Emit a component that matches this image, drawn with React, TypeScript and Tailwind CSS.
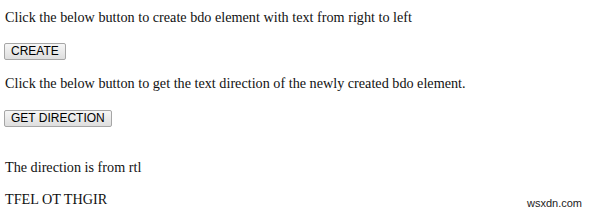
import React from "react";

const btn =
  "h-[17px] px-[6px] border border-[#a6a6a6] rounded-[2px] bg-gradient-to-b from-[#f6f6f6] to-[#dedede] text-[12px] leading-[15px] text-black font-['Liberation_Sans',Arial,sans-serif] self-start";

export default function App() {
  return (
    <div className="relative w-[600px] h-[213px] bg-white overflow-hidden font-['Liberation_Serif','Times_New_Roman',serif] text-[14.2px] leading-[16px] text-[#111]">
      <div className="flex flex-col pl-[5px] pt-[9px]">
        <p>Click the below button to create bdo element with text from right to left</p>
        <button className={btn + " mt-[18px] ml-[-1px]"}>CREATE</button>
        <p className="mt-[15px]">Click the below button to get the text direction of the newly created bdo element.</p>
        <button className={btn + " mt-[19px] ml-[-1px]"}>GET DIRECTION</button>
        <p className="mt-[32px]">The direction is from rtl</p>
        <p className="mt-[16px]">
          <bdo dir="rtl">RIGHT TO LEFT</bdo>
        </p>
      </div>
      <div className="absolute left-[527px] top-[197px] text-[11px] leading-[12px] text-[#222] font-['Liberation_Sans',Arial,sans-serif]">
        wsxdn.com
      </div>
    </div>
  );
}
